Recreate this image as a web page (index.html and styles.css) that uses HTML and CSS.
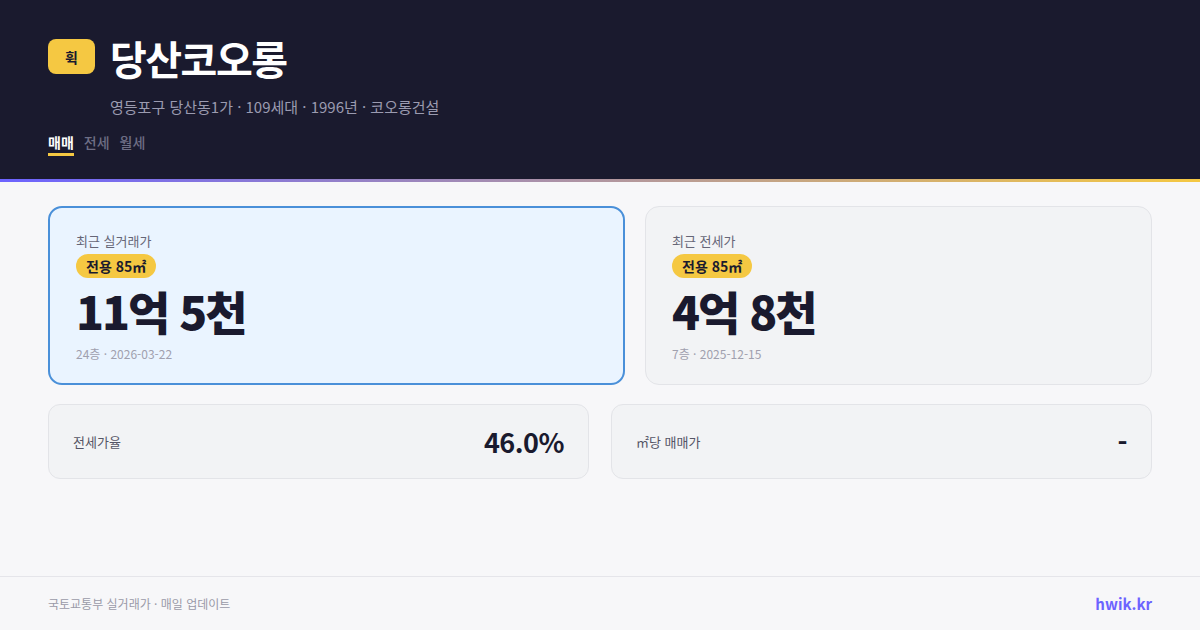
FILE: index.html
```html
<!DOCTYPE html>
<html lang="ko">
<head>
<meta charset="utf-8">
<title>당산코오롱</title>
<link rel="stylesheet" href="styles.css">
</head>
<body>
<div class="page">
  <header class="header">
    <div class="head-row">
      <div class="logo">휙</div>
      <div class="head-text">
        <h1 class="title">당산코오롱</h1>
        <p class="subtitle">영등포구 당산동1가 · 109세대 · 1996년 · 코오롱건설</p>
      </div>
    </div>
    <nav class="tabs">
      <span class="tab active">매매</span>
      <span class="tab">전세</span>
      <span class="tab">월세</span>
    </nav>
  </header>
  <main class="main">
    <section class="price-row">
      <div class="card card-primary">
        <div class="card-label">최근 실거래가</div>
        <div class="badge-line"><span class="badge">전용 85㎡</span></div>
        <div class="price">11억 5천</div>
        <div class="meta">24층 · 2026-03-22</div>
      </div>
      <div class="card">
        <div class="card-label">최근 전세가</div>
        <div class="badge-line"><span class="badge">전용 85㎡</span></div>
        <div class="price">4억 8천</div>
        <div class="meta">7층 · 2025-12-15</div>
      </div>
    </section>
    <section class="stat-row">
      <div class="stat">
        <span class="stat-label">전세가율</span>
        <span class="stat-value">46.0%</span>
      </div>
      <div class="stat">
        <span class="stat-label">㎡당 매매가</span>
        <span class="stat-value">-</span>
      </div>
    </section>
  </main>
  <footer class="footer">
    <span class="source">국토교통부 실거래가 · 매일 업데이트</span>
    <span class="brand">hwik.kr</span>
  </footer>
</div>
</body>
</html>
```
FILE: styles.css
```css
* { box-sizing: border-box; margin: 0; padding: 0; }
html, body {
  width: 1200px;
  height: 630px;
  overflow: hidden;
}
body {
  background: #f7f7f9;
  font-family: "Noto Sans CJK KR", "Noto Sans", sans-serif;
  color: #1a1a2e;
}
.page {
  height: 630px;
  display: flex;
  flex-direction: column;
}
.header {
  background: #1a1a2e;
  height: 182px;
  padding: 39px 48px 0;
  border-bottom: 3px solid transparent;
  border-image: linear-gradient(90deg, #6c63ff, #f5c842) 1;
}
.head-row {
  display: flex;
  align-items: flex-start;
  gap: 15px;
}
.logo {
  width: 47px;
  height: 35px;
  border-radius: 8px;
  background: #f5c842;
  color: #1a1a2e;
  font-weight: 700;
  font-size: 14px;
  display: flex;
  align-items: center;
  justify-content: center;
}
.title {
  color: #ffffff;
  font-size: 40px;
  font-weight: 700;
  line-height: 40px;
  letter-spacing: -1.5px;
  margin-top: -1px;
}
.subtitle {
  color: #9b9bb0;
  font-size: 15px;
  line-height: 20px;
  margin-top: 19px;
}
.tabs {
  display: flex;
  gap: 10px;
  margin-top: 15px;
}
.tab {
  color: #6e6e85;
  font-size: 14px;
  font-weight: 500;
  line-height: 20px;
  padding-bottom: 1px;
  border-bottom: 3px solid transparent;
}
.tab.active {
  color: #ffffff;
  font-weight: 700;
  border-bottom-color: #f5c842;
}
.main {
  padding: 24px 48px 0;
  display: flex;
  flex-direction: column;
  gap: 19px;
}
.price-row {
  display: grid;
  grid-template-columns: 577fr 507fr;
  gap: 20px;
}
.card {
  height: 179px;
  border: 1px solid #e3e4e8;
  border-radius: 14px;
  background: #f2f3f5;
  padding: 25px 26px 0;
}
.card-primary {
  border: 2px solid #4a90d9;
  background: #eaf4ff;
  padding: 24px 26px 0;
}
.card-label {
  font-size: 13px;
  line-height: 18px;
  color: #666677;
}
.badge-line {
  display: flex;
  margin-top: 4px;
}
.badge {
  background: #f5c842;
  color: #1a1a2e;
  font-size: 14px;
  font-weight: 700;
  line-height: 24px;
  padding: 0 10px;
  border-radius: 12px;
}
.price {
  font-size: 46px;
  font-weight: 800;
  line-height: 48px;
  letter-spacing: -2px;
  color: #1a1a2e;
  margin-top: 8px;
}
.meta {
  margin-top: 12px;
  font-size: 12px;
  line-height: 16px;
  color: #a0a0ae;
}
.stat-row {
  display: grid;
  grid-template-columns: 1fr 1fr;
  gap: 22px;
}
.stat {
  height: 75px;
  border: 1px solid #e3e4e8;
  border-radius: 12px;
  background: #f2f3f5;
  padding: 0 24px;
  display: flex;
  align-items: center;
  justify-content: space-between;
}
.stat-label {
  font-size: 13px;
  color: #555566;
}
.stat-value {
  font-size: 27px;
  font-weight: 700;
  color: #1a1a2e;
  letter-spacing: -0.5px;
}
.footer {
  margin-top: auto;
  height: 54px;
  border-top: 1px solid #e5e5ea;
  padding: 0 48px;
  display: flex;
  align-items: center;
  justify-content: space-between;
}
.source {
  font-size: 12px;
  color: #9a9aa8;
}
.brand {
  font-size: 15px;
  font-weight: 700;
  color: #6c63ff;
}
```
